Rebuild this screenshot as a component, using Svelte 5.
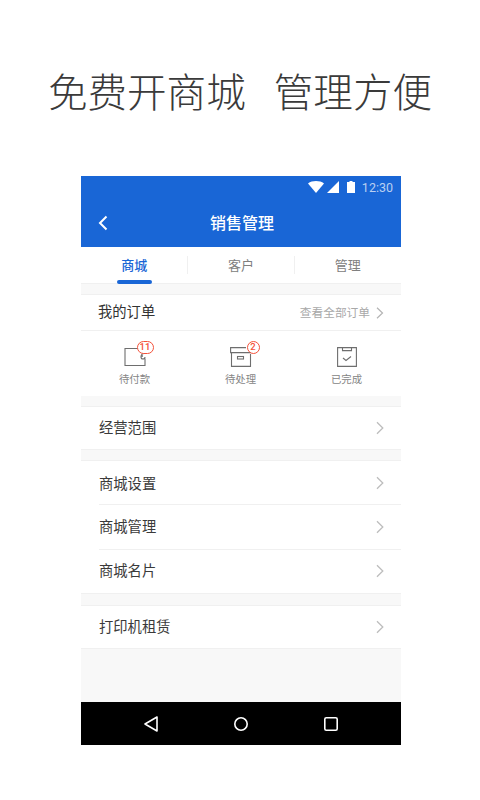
<script>
  const tabs = [
    { label: '商城', active: true },
    { label: '客户' },
    { label: '管理' }
  ]
  const groups = [
    ['经营范围'],
    ['商城设置', '商城管理', '商城名片'],
    ['打印机租赁']
  ]
</script>

<div class="page">
  <h1 class="headline">免费开商城<span class="gap"></span>管理方便</h1>

  <div class="phone">
    <header class="appbar">
      <div class="status">
        <svg width="16" height="12" viewBox="0 0 16 12"><path d="M0 2.400C2.200.8 5 0 8 0s5.800.8 8 2.400L8 12z" fill="#fff" /></svg>
        <svg width="12" height="12" viewBox="0 0 12 12"><path d="M12 0v12H0z" fill="#fff" /></svg>
        <svg class="battery" width="8" height="12" viewBox="0 0 8 12"><path d="M2.500 0h3v1H8v11H0V1h2.500z" fill="#fff" /></svg>
        <span class="clock">12:30</span>
      </div>
      <div class="titlebar">
        <svg class="back" width="10" height="16" viewBox="0 0 10 16"><path d="M8.500 1.500 2 8l6.500 6.500" fill="none" stroke="#fff" stroke-width="2" /></svg>
        <span>销售管理</span>
      </div>
    </header>

    <nav class="tabs">
      {#each tabs as tab}
        <div class="tab" class:active={tab.active}><span>{tab.label}</span></div>
      {/each}
    </nav>

    <section class="orders">
      <div class="orders-head">
        <span class="orders-title">我的订单</span>
        <span class="orders-all">查看全部订单</span>
        <svg class="chevron" width="8" height="12" viewBox="0 0 8 12"><path d="M1 .8 6.500 6 1 11.200" fill="none" stroke="#b4b4b4" stroke-width="1.200" /></svg>
      </div>
      <div class="order-types">
        <div class="order-type">
          <div class="icon">
            <svg width="22" height="20" viewBox="0 0 22 20">
              <g fill="none" stroke="#6e6e6e" stroke-width="1.100">
                <path d="M15 1.500H1v17h20v-7" />
                <path d="M21 6.500h-1a3 3 0 0 0-3 3v.5a2 2 0 0 0 4 0" />
              </g>
              <circle cx="18" cy="9" r="1" fill="#6e6e6e" />
            </svg>
            <span class="badge wide">11</span>
          </div>
          <span class="order-label">待付款</span>
        </div>
        <div class="order-type">
          <div class="icon">
            <svg width="22" height="20" viewBox="0 0 22 20">
              <g fill="none" stroke="#6e6e6e" stroke-width="1.100">
                <path d="M16 .6H.6v5h20.800" />
                <path d="M1.500 5.600v13.800h19V7" />
                <rect x="7.500" y="9.500" width="6" height="2.500" />
              </g>
            </svg>
            <span class="badge">2</span>
          </div>
          <span class="order-label">待处理</span>
        </div>
        <div class="order-type">
          <div class="icon">
            <svg width="20" height="20" viewBox="0 0 20 20">
              <g fill="none" stroke="#6e6e6e" stroke-width="1.100">
                <path d="M.6.600h18.800v18.800H.6z" />
                <path d="M5.500.600v3h9v-3" />
                <path d="m6 11 3 2.500 5-4" />
              </g>
            </svg>
          </div>
          <span class="order-label">已完成</span>
        </div>
      </div>
    </section>

    {#each groups as items}
      <section class="group">
        {#each items as item}
          <div class="row" class:short={items.length === 1}>
            <span>{item}</span>
            <svg width="8" height="14" viewBox="0 0 8 14"><path d="M1 1.200 6.800 7 1 12.800" fill="none" stroke="#bdbdbd" stroke-width="1.300" /></svg>
          </div>
        {/each}
      </section>
    {/each}

    <div class="filler"></div>

    <footer class="navbar">
      <svg width="14" height="16" viewBox="0 0 14 16"><path d="M13 1v14L1 8z" fill="none" stroke="#fff" stroke-width="1.600" stroke-linejoin="round" /></svg>
      <svg width="14" height="14" viewBox="0 0 14 14"><circle cx="7" cy="7" r="6.200" fill="none" stroke="#fff" stroke-width="1.600" /></svg>
      <svg width="14" height="14" viewBox="0 0 14 14"><rect x=".8" y=".8" width="12.400" height="12.400" rx="1.500" fill="none" stroke="#fff" stroke-width="1.600" /></svg>
    </footer>
  </div>
</div>

<style>
  :global(body) {
    margin: 0;
    background: #fff;
  }
  .page {
    width: 480px;
    height: 800px;
    overflow: hidden;
    display: flex;
    flex-direction: column;
    align-items: center;
    font-family: "Noto Sans CJK SC", "Noto Sans", sans-serif;
  }
  .headline {
    margin: 61px 0 0;
    height: 115px;
    font-size: 39.6px;
    line-height: 58px;
    font-weight: 300;
    color: #3a3a3a;
    white-space: nowrap;
  }
  .gap {
    display: inline-block;
    width: 28px;
  }
  .phone {
    width: 320px;
    height: 569px;
    display: flex;
    flex-direction: column;
    background: #f8f8f8;
    margin-left: 2px;
  }
  .appbar {
    height: 71px;
    flex: none;
    background: #1966d6;
    color: #fff;
  }
  .status {
    height: 22px;
    display: flex;
    align-items: center;
    justify-content: flex-end;
    padding-right: 8px;
    gap: 3px;
  }
  .battery {
    margin: 0 4px 0 5px;
  }
  .clock {
    font-family: Roboto, sans-serif;
    font-size: 12.5px;
    color: #b9d0f1;
  }
  .titlebar {
    position: relative;
    height: 49px;
    display: flex;
    align-items: center;
    justify-content: center;
    padding: 0 0 2px 2px;
    box-sizing: border-box;
    font-size: 16px;
    font-weight: 500;
  }
  .back {
    position: absolute;
    left: 17px;
    top: 17px;
  }
  .tabs {
    height: 37px;
    flex: none;
    display: grid;
    grid-template-columns: repeat(3, 1fr);
    background: #fff;
    border-bottom: 1px solid #f0f0f0;
    box-sizing: border-box;
  }
  .tab {
    display: flex;
    align-items: center;
    justify-content: center;
    position: relative;
    padding-bottom: 2px;
    box-sizing: border-box;
    font-size: 13px;
    color: #808080;
  }
  .tab + .tab::before {
    content: '';
    position: absolute;
    left: -1px;
    top: 9px;
    height: 18px;
    width: 1px;
    background: #f0f0f0;
  }
  .tab:last-child::before {
    left: 0;
  }
  .tab.active {
    color: #1966d6;
    font-weight: 500;
  }
  .tab.active span::after {
    content: '';
    position: absolute;
    left: 36px;
    bottom: -1px;
    width: 35px;
    height: 4px;
    border-radius: 2px;
    background: #1966d6;
  }
  .orders {
    margin-top: 10px;
    background: #fff;
    border-top: 1px solid #f0f0f0;
    flex: none;
  }
  .orders-head {
    height: 35px;
    display: flex;
    align-items: center;
    padding: 0 17px;
    border-bottom: 1px solid #f0f0f0;
  }
  .orders-title {
    flex: 1;
    padding-bottom: 4px;
    font-size: 14.3px;
    color: #333;
  }
  .orders-all {
    padding-bottom: 3px;
    font-size: 11.7px;
    color: #a8a8a8;
    margin-right: 6px;
  }
  .order-types {
    height: 65px;
    display: grid;
    grid-template-columns: repeat(3, 106px);
    padding-left: 0.5px;
    box-sizing: border-box;
  }
  .order-type {
    display: flex;
    flex-direction: column;
    align-items: center;
    padding-top: 16px;
  }
  .icon {
    position: relative;
    height: 20px;
    display: flex;
  }
  .order-label {
    margin-top: 3px;
    font-size: 10.4px;
    line-height: 18px;
    color: #858585;
  }
  .badge {
    position: absolute;
    top: -6px;
    left: 17px;
    box-sizing: border-box;
    width: 13px;
    height: 13px;
    border: 1.4px solid #f4523b;
    border-radius: 7px;
    background: #fff;
    color: #f4523b;
    font-family: Roboto, sans-serif;
    font-size: 9.5px;
    font-weight: 500;
    line-height: 10px;
    text-align: center;
  }
  .badge.wide {
    width: 17px;
    left: 13px;
  }
  .group {
    margin-top: 10px;
    background: #fff;
    border-top: 1px solid #f0f0f0;
    border-bottom: 1px solid #f0f0f0;
    flex: none;
  }
  .group:last-of-type {
    margin-top: 11px;
  }
  .row {
    height: 44.4px;
    box-sizing: border-box;
    margin-left: 18px;
    padding-right: 17px;
    display: flex;
    align-items: center;
    justify-content: space-between;
    font-size: 14.3px;
    color: #3a3a3a;
    border-bottom: 1px solid #f0f0f0;
  }
  .row:last-child {
    height: 43.4px;
    border-bottom: none;
  }
  .row.short {
    height: 42px;
    margin-left: 0;
    padding-left: 18px;
  }
  .row span {
    padding-bottom: 4px;
  }
  .row:first-child:not(.short) span {
    padding-bottom: 1px;
  }
  .filler {
    flex: 1;
  }
  .navbar {
    height: 43px;
    flex: none;
    background: #000;
    display: grid;
    grid-template-columns: repeat(3, 90px);
    justify-content: center;
    justify-items: center;
    align-items: center;
  }
</style>
